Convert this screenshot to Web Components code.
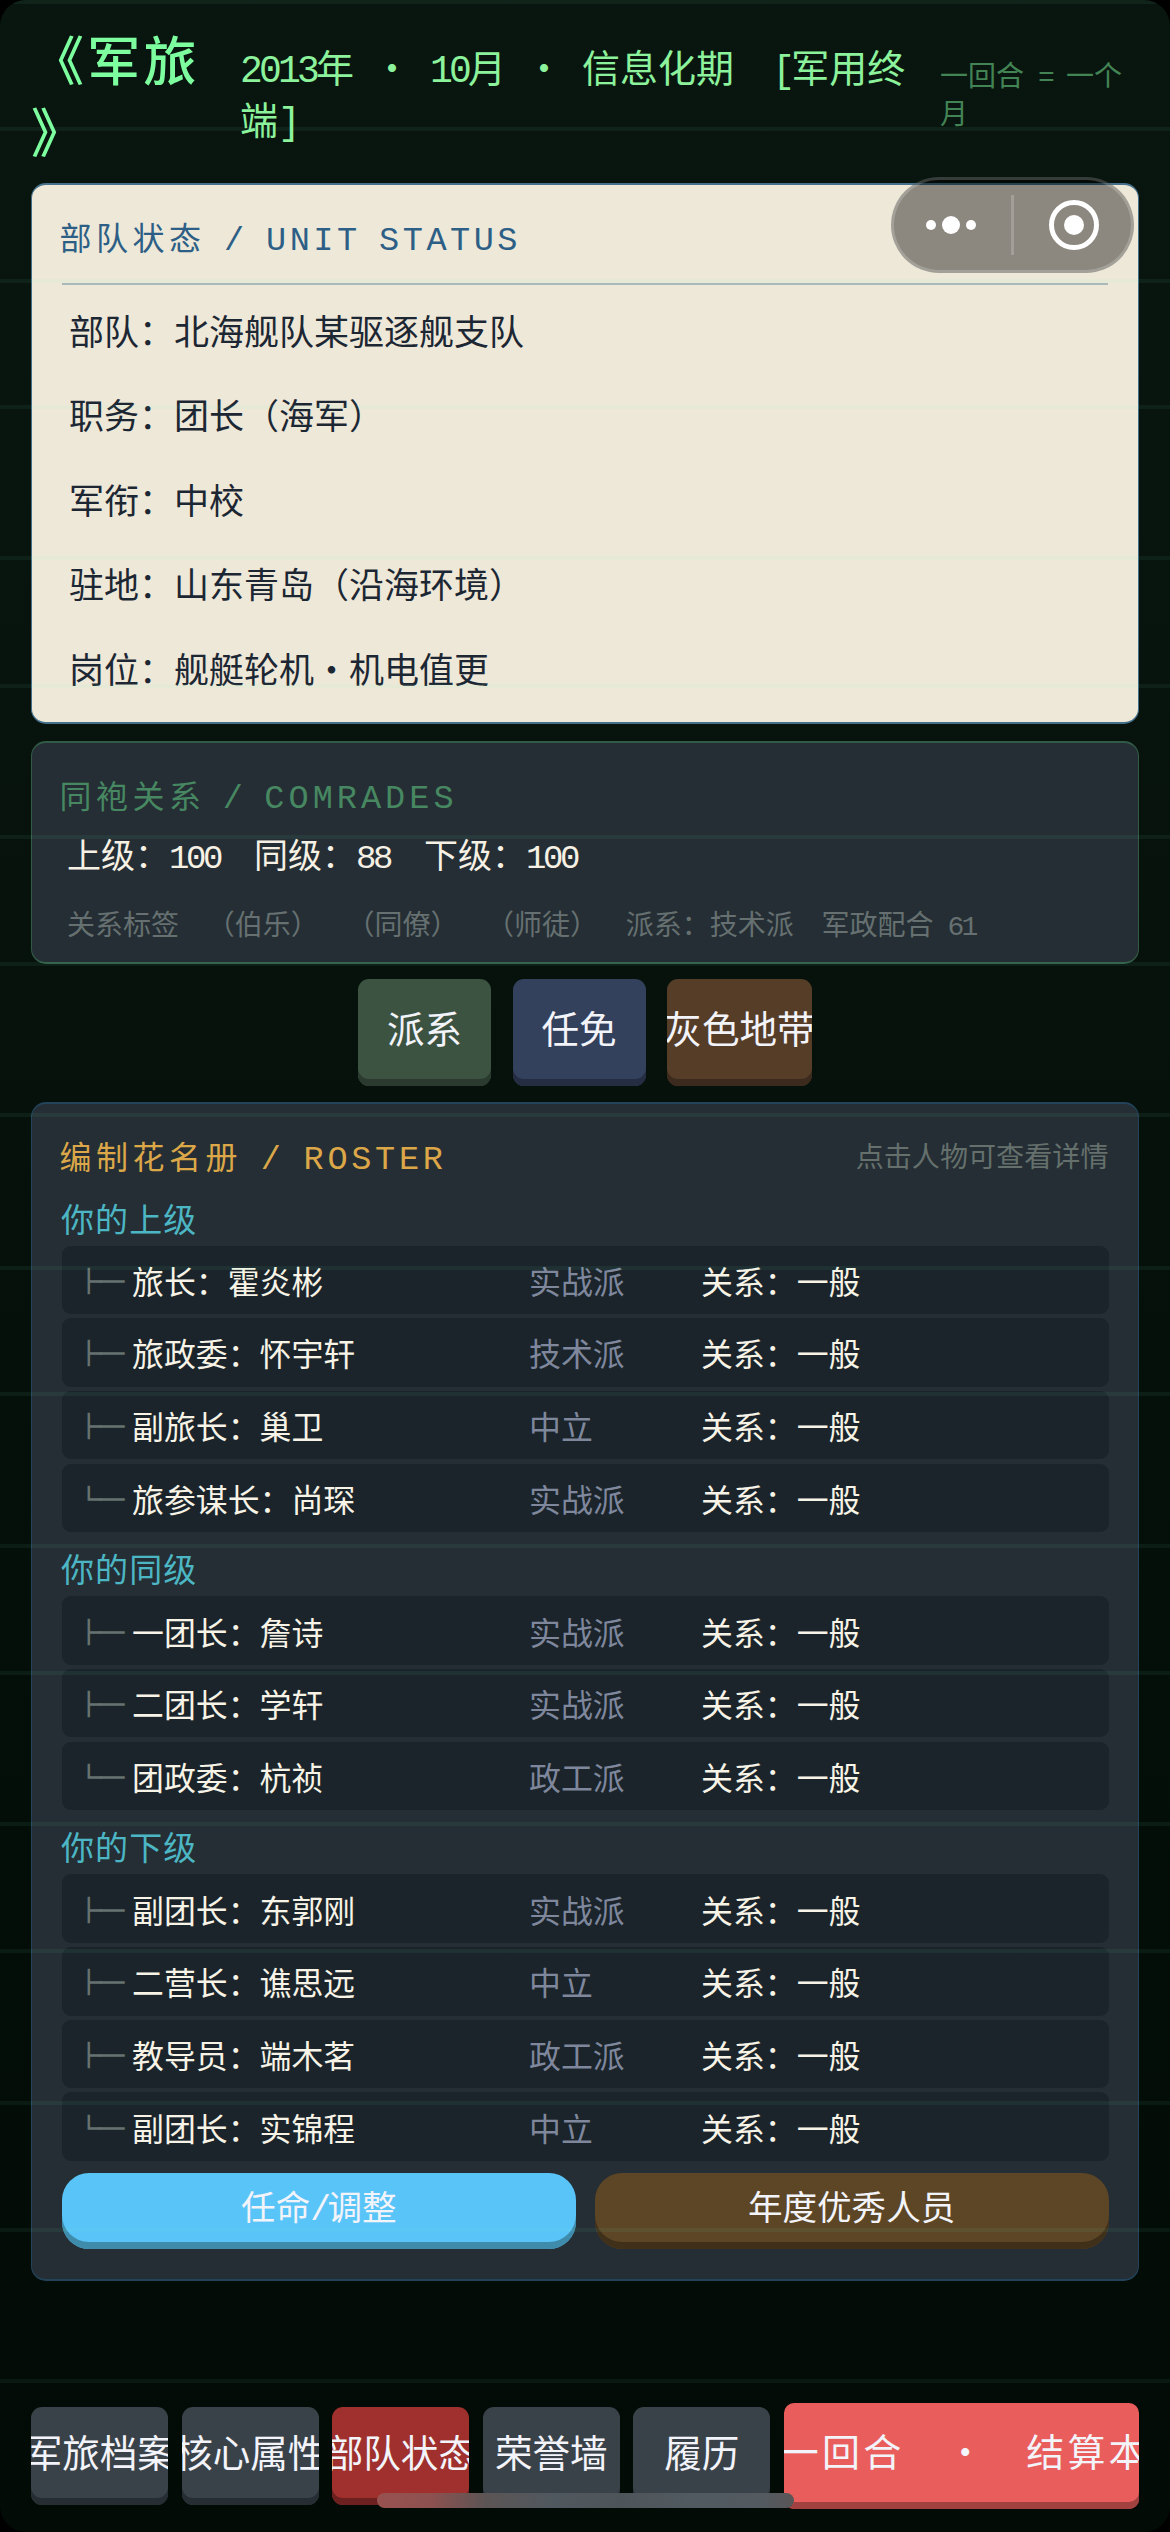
<!DOCTYPE html>
<html lang="zh-CN">
<head>
<meta charset="utf-8">
<title>军旅</title>
<style>
html,body{margin:0;padding:0;background:#000}
body{width:1170px;height:2532px;overflow:hidden;font-family:"Noto Sans CJK SC",sans-serif}
</style>
</head>
<body>
<game-screen></game-screen>
<script>
const MIX = `.a{font-family:"Liberation Mono","Noto Sans CJK SC",monospace;font-size:var(--afs,1em);line-height:1;letter-spacing:var(--als,-.1em);word-spacing:var(--aws,0)}
.d{display:inline-block;width:1em;text-align:center;line-height:1;letter-spacing:0}`;
/* Latin runs sit on a half-em grid; the middle dot takes a full em */
const mix = t => t.replace(/\n|·|[\x20-\x7e]+/g, m => m === '\n' ? '<br>' : m === '·' ? '<span class="d">·</span>' : `<span class="a">${m}</span>`);
const def = (name, css, html) => customElements.define(name, class extends HTMLElement {
  connectedCallback() {
    if (this.shadowRoot) return;
    const r = this.attachShadow({mode: 'open'});
    r.innerHTML = `<style>*{box-sizing:border-box}:host{box-sizing:border-box}${css}</style>` + (typeof html === 'function' ? html(this) : html);
  }
});
const at = (e, n) => e.getAttribute(n) || '';

def('px-text', `:host{display:block;white-space:pre;flex:none}${MIX}`, e => mix(at(e, 't').replace(/\\n/g, '\n')));

def('top-bar', `:host{display:flex;height:183px;padding-left:31px;flex:none}
.t{width:209px;padding-top:22px;font-size:53px;letter-spacing:3.3px;line-height:72px;color:#7dff9f;font-weight:500}
.m{width:700px;padding-top:40px;font-size:38px;line-height:52px;color:#8cf29c}
.r{padding-top:55px;font-size:28px;line-height:38px;color:#438455}`,
`<px-text class="t" t="《军旅\\n》"></px-text><px-text class="m" t="2013年 · 10月 · 信息化期  [军用终\\n端]"></px-text><px-text class="r" t="一回合 = 一个\\n月"></px-text>`);

def('unit-card', `:host{display:block;height:541px;margin:0 31px;background:#eee8d8;border:2px solid #44708c;border-left-width:1px;border-right-width:1px;border-radius:15px;padding:25px 30px 0 29px;flex:none}
.h{margin-left:-1.5px;font-size:32px;letter-spacing:4.5px;line-height:52px;color:#2d5f86;--afs:1.05em;--als:3.5px;--aws:-5.2px}
.l{height:2px;background:#a9b9b9;margin:21px 0 3px 1px}
.r{font-size:35px;line-height:84.4px;color:#1c2733;padding-left:8px}`,
`<px-text class="h" t="部队状态 / UNIT STATUS"></px-text><div class="l"></div>` +
['部队：北海舰队某驱逐舰支队','职务：团长（海军）','军衔：中校','驻地：山东青岛（沿海环境）','岗位：舰艇轮机·机电值更'].map(t => `<px-text class="r" t="${t}"></px-text>`).join(''));

def('comrades-card', `:host{display:block;height:223px;margin:17px 31px 0;background:#242e34;border:2px solid #315b46;border-left-width:1px;border-right-width:1px;border-radius:15px;padding:25px 29px 0;flex:none}
.h{margin-left:-1.5px;font-size:32px;letter-spacing:4.5px;line-height:52px;color:#478761;--afs:1.05em;--als:4px;--aws:-6.8px}
.s{display:flex;gap:34px;padding:10px 0 0 6px;font-size:34px;line-height:48px;color:#f6f1e4}
.g{display:flex;gap:27.7px;padding:23px 0 0 6px;font-size:28px;line-height:44px;color:#667070}`,
`<px-text class="h" t="同袍关系 / COMRADES"></px-text>
<div class="s"><px-text t="上级：100"></px-text><px-text t="同级：88"></px-text><px-text t="下级：100"></px-text></div>
<div class="g">${['关系标签','（伯乐）','（同僚）','（师徒）','派系：技术派','军政配合 61'].map(t => `<px-text t="${t}"></px-text>`).join('')}</div>`);

def('push-button', `:host{display:flex;justify-content:center;align-items:center;overflow:hidden;flex:none;background:var(--face);border-radius:11px;box-shadow:inset 0 -7px 0 var(--edge);padding-bottom:7px;font-size:37.6px;color:#f3f3fa}
px-text{line-height:50px;margin-top:-4px;margin-left:var(--shift,0)}`, e => `<px-text t="${at(e, 't')}"></px-text>`);

def('action-row', `:host{display:flex;gap:21.5px;margin:15px 0 0 358px;height:107px;flex:none}
push-button{height:107px;width:133px}`,
`<push-button t="派系" style="--face:#3c5342;--edge:#2b3a2e"></push-button><push-button t="任免" style="--face:#34415d;--edge:#252d42"></push-button><push-button t="灰色地带" style="--face:#553d28;--edge:#3b2a1d;width:145px"></push-button>`);

def('branch-mark', `:host{display:block;width:47px;font-size:23.5px;line-height:34px;color:#687572;-webkit-text-stroke:1.4px #66726f;white-space:pre;flex:none}`, e => at(e, 'last') ? '└─' : '├─');

def('roster-row', `:host{display:flex;align-items:center;height:68.5px;margin-bottom:4.2px;background:#1a242a;border-radius:9px;padding-left:15px;font-size:31.9px;line-height:48px;color:#f7f3e6}
px-text{margin-top:0}.n{width:405px;padding-left:8px}.f{width:172px;color:#7f879d}`,
e => `<branch-mark ${at(e, 'last') ? 'last="1"' : ''}></branch-mark><px-text class="n" t="${at(e, 'name')}"></px-text><px-text class="f" t="${at(e, 'faction')}"></px-text><px-text t="关系：一般"></px-text>`);

def('roster-group', `:host{display:block}
.h{height:60px;padding:8px 0 0 0;margin-left:-1px;font-size:33px;letter-spacing:1.1px;line-height:48px;color:#4cb6c4}
:host([first]) .h{height:52px;padding-top:0}`,
e => `<px-text class="h" t="${at(e, 'label')}"></px-text><slot></slot>`);

def('roster-card', `:host{display:block;height:1179px;margin:16px 31px 0;background:#242e34;border:2px solid #22435a;border-left-width:1px;border-right-width:1px;border-radius:15px;padding:25px 29.5px 0 30px;flex:none}
.top{display:flex;justify-content:space-between;height:64.5px;margin-left:-2.5px}
.h{font-size:32px;letter-spacing:4.5px;line-height:52px;color:#dca748;--afs:1.05em;--als:3.7px;--aws:-5px}
.hint{font-size:28.1px;line-height:52px;color:#65706d}
.b{display:flex;gap:19px;padding-top:8px}
push-button{flex:1;height:75.5px;font-size:34.6px;border-radius:27px}`,
() => {
 const g = (label, rows, first) => `<roster-group ${first ? 'first' : ''} label="${label}">` + rows.map((r, i) => `<roster-row name="${r[0]}" faction="${r[1]}" ${i === rows.length - 1 ? 'last="1"' : ''}></roster-row>`).join('') + `</roster-group>`;
 return `<div class="top"><px-text class="h" t="编制花名册 / ROSTER"></px-text><px-text class="hint" t="点击人物可查看详情"></px-text></div>` +
 g('你的上级', [['旅长：霍炎彬','实战派'],['旅政委：怀宇轩','技术派'],['副旅长：巢卫','中立'],['旅参谋长：尚琛','实战派']], 1) +
 g('你的同级', [['一团长：詹诗','实战派'],['二团长：学轩','实战派'],['团政委：杭祯','政工派']]) +
 g('你的下级', [['副团长：东郭刚','实战派'],['二营长：谯思远','中立'],['教导员：端木茗','政工派'],['副团长：实锦程','中立']]) +
 `<div class="b"><push-button t="任命/调整" style="--face:#59c4f7;--edge:#3f8bac"></push-button><push-button t="年度优秀人员" style="--face:#5c4625;--edge:#40301a"></push-button></div>`;
});

def('bottom-nav', `:host{display:flex;align-items:center;gap:13.5px;margin:122px 31px 0 31.3px;height:106px;flex:none}
push-button{width:137px;height:98px;--face:#394249;--edge:#262d33}
.on{--face:#9f302d;--edge:#6c2120}
.go{width:355px;height:106px;font-size:38px;letter-spacing:3.2px;border-radius:10px;--face:#e95d5c;--edge:#a14140;--afs:1.05em;--als:-1px;--aws:-2px;--shift:8px}`,
`<push-button t="军旅档案"></push-button><push-button t="核心属性"></push-button><push-button class="on" t="部队状态"></push-button><push-button t="荣誉墙"></push-button><push-button t="履历"></push-button><push-button class="go" t="一回合  ·  结算本"></push-button>`);

def('menu-capsule', `:host{position:absolute;left:891px;top:177px;width:243px;height:96px;border-radius:48px;background:rgba(0,0,0,.41);border:3px solid rgba(255,255,255,.2)}svg{display:block}`,
`<svg width="237" height="90" viewBox="0 0 237 90" fill="#fff"><circle cx="37" cy="45" r="5"/><circle cx="57" cy="45" r="9"/><circle cx="77" cy="45" r="5"/><rect x="117" y="15" width="3" height="60" opacity=".2"/><circle cx="180" cy="45" r="22.5" fill="none" stroke="#fff" stroke-width="5"/><circle cx="180" cy="45" r="10"/></svg>`);

def('home-bar', `:host{position:absolute;left:377px;top:2493px;width:417px;height:15px;border-radius:7.5px;background:linear-gradient(90deg,#985250 0,#8d514f 13%,#5c5555 26%,#50585f 42%,#4e555a 58%,#515a61 76%,#535a60 93%,#5a5557 100%)}`, '');

/* faint horizontal CRT bands across everything */
const bands = [0,127,279,405,556,684,835,962,1113,1266,1392,1544,1671,1822,1949,2101,2228,2379];
def('scan-lines', `:host{position:absolute;inset:0;pointer-events:none;background:${bands.map(y => `linear-gradient(rgba(120,255,200,.06),rgba(120,255,200,.06)) 0 ${y}px/100% 4px no-repeat`).join(',')}}`, '');

def('game-screen', `:host{display:flex;flex-direction:column;position:relative;width:1170px;height:2532px;overflow:hidden;border-radius:26px;background:linear-gradient(#09160f,#06110b 45%,#020b06)}`,
`<top-bar></top-bar><unit-card></unit-card><comrades-card></comrades-card><action-row></action-row><roster-card></roster-card><bottom-nav></bottom-nav><scan-lines></scan-lines><menu-capsule></menu-capsule><home-bar></home-bar>`);
</script>
</body>
</html>
